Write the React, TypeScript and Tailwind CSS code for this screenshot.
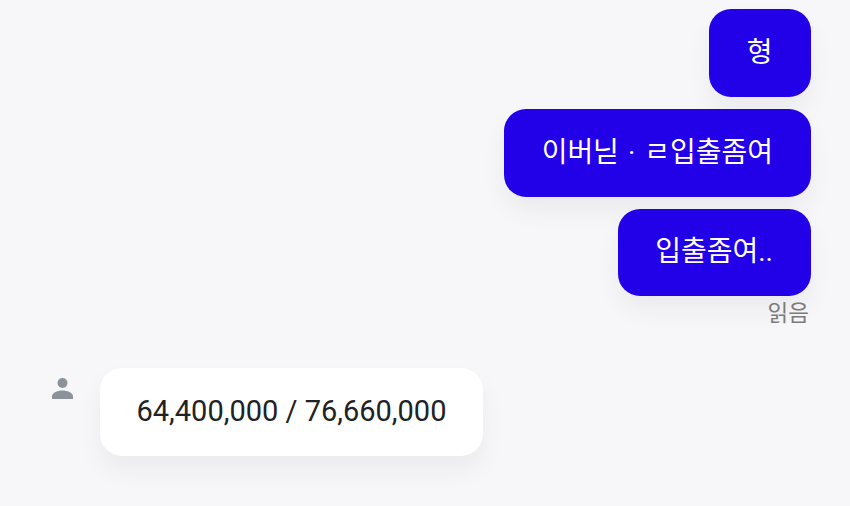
export default function App() {
  const bubble = "flex items-center rounded-[22px] bg-[#2200e8] pb-[1px] text-[28px] text-white shadow-[0_14px_26px_rgba(20,20,60,0.05)]";
  return (
    <div className="flex h-[506px] w-[850px] flex-col overflow-hidden bg-[#f7f7f9] pt-[9px] font-['Roboto','Noto_Sans_CJK_KR',sans-serif]">
      <div className="flex flex-col items-end gap-[12px] pr-[39.5px]">
        <div className={`${bubble} h-[88px] px-[38px]`}>형</div>
        <div className={`${bubble} h-[88px] px-[37.5px] [word-spacing:2px]`}>이버닏 · ㄹ입출좀여</div>
        <div className={`${bubble} h-[87px] px-[37.5px]`}>입출좀여..</div>
      </div>
      <div className="flex justify-end pr-[41px] pt-[1px] text-[22.5px] leading-[32px] text-[#7b7b7b]">읽음</div>
      <div className="mt-[39px] flex items-start pl-[51px]">
        <svg className="mt-[8px]" width="23" height="24" viewBox="0 0 23 24" fill="#8b9299">
          <circle cx="11.5" cy="7" r="5" />
          <path d="M1 23v-2.5c0-4 6-6 10.5-6s10.5 2 10.5 6V23z" />
        </svg>
        <div className="ml-[25.5px] flex h-[88px] items-center rounded-[22px] bg-white px-[37px] text-[29px] text-[#222224] shadow-[0_14px_26px_rgba(20,20,60,0.05)]">64,400,000 / 76,660,000</div>
      </div>
    </div>
  );
}
